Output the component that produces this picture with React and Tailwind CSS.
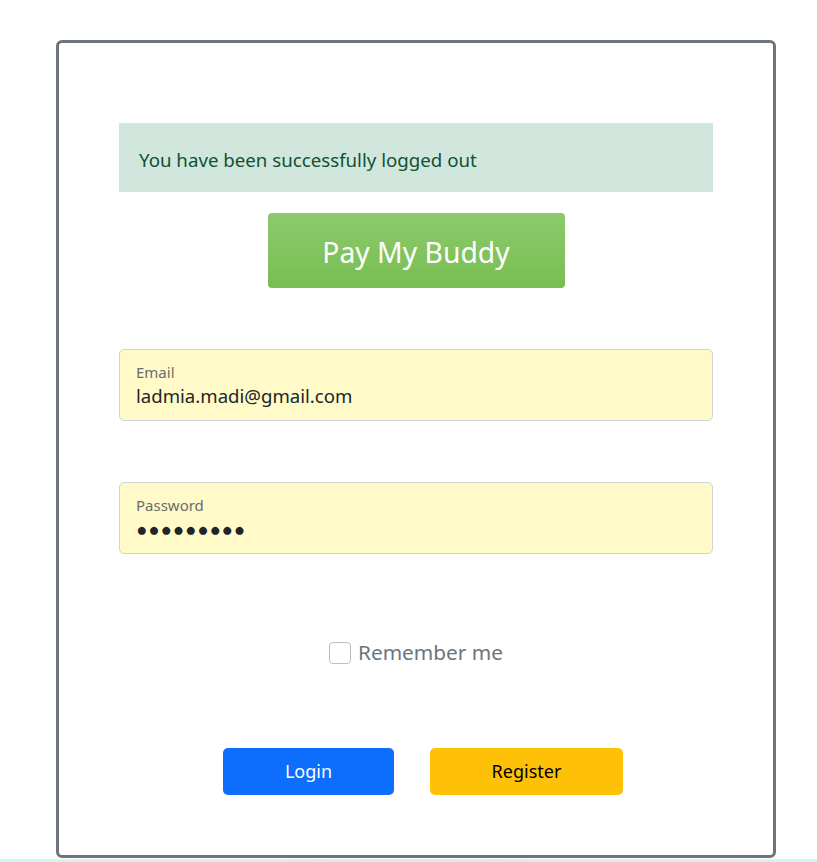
export default function App() {
  const font = { fontFamily: '"Segoe UI", "Noto Sans", "Open Sans", sans-serif' };
  return (
    <div className="relative min-h-[862px] bg-white" style={font}>
      <div className="pt-[40px] pl-[56px]">
        <div className="w-[720px] h-[818px] border-[3px] border-[#6c757d] rounded-[6px] px-[60px] pt-[80px]">
          <div className="h-[69px] bg-[#d1e7dd] text-[#0f5132] text-[18.7px] flex items-center px-[20px] pt-[6px]">
            You have been successfully logged out
          </div>

          <div className="flex justify-center mt-[21px]">
            <div className="w-[297px] h-[75px] rounded-[4px] bg-gradient-to-b from-[#8cc96b] to-[#77bf52] text-white text-[28.3px] flex items-center justify-center pt-[4px]">
              Pay My Buddy
            </div>
          </div>

          <div className="mt-[61px] h-[72px] rounded-[5px] border border-[#ced4da] bg-[#fffac8] px-[16px] pt-[12px]">
            <div className="text-[15px] leading-[20px] text-[#6c6c6c]">Email</div>
            <div className="text-[18.6px] leading-[28px] text-[#212529]">ladmia.madi@gmail.com</div>
          </div>

          <div className="mt-[61px] h-[72px] rounded-[5px] border border-[#ced4da] bg-[#fffac8] px-[16px] pt-[12px]">
            <div className="text-[15px] leading-[20px] text-[#6c6c6c]">Password</div>
            <div className="text-[18.6px] leading-[28px] text-[#212529] tracking-[1px]">●●●●●●●●●</div>
          </div>

          <div className="mt-[83px] flex items-center justify-center gap-[7px]">
            <span className="w-[22px] h-[22px] rounded-[4px] border border-[#bdbdbd] bg-white" />
            <span className="text-[20.8px] text-[#6c757d]">Remember me</span>
          </div>

          <div className="mt-[80px] flex justify-center gap-[36px] pl-[14px]">
            <button className="w-[171px] h-[47px] rounded-[5px] bg-[#0d6efd] text-white text-[18px]">Login</button>
            <button className="w-[193px] h-[47px] rounded-[5px] bg-[#ffc107] text-black text-[18px]">Register</button>
          </div>
        </div>
      </div>
      <div className="absolute left-0 right-0 top-[859px] h-[3px] bg-gradient-to-r from-[#d3f5ef] via-[#d8ecef] to-[#d3f5ef]" />
    </div>
  );
}
